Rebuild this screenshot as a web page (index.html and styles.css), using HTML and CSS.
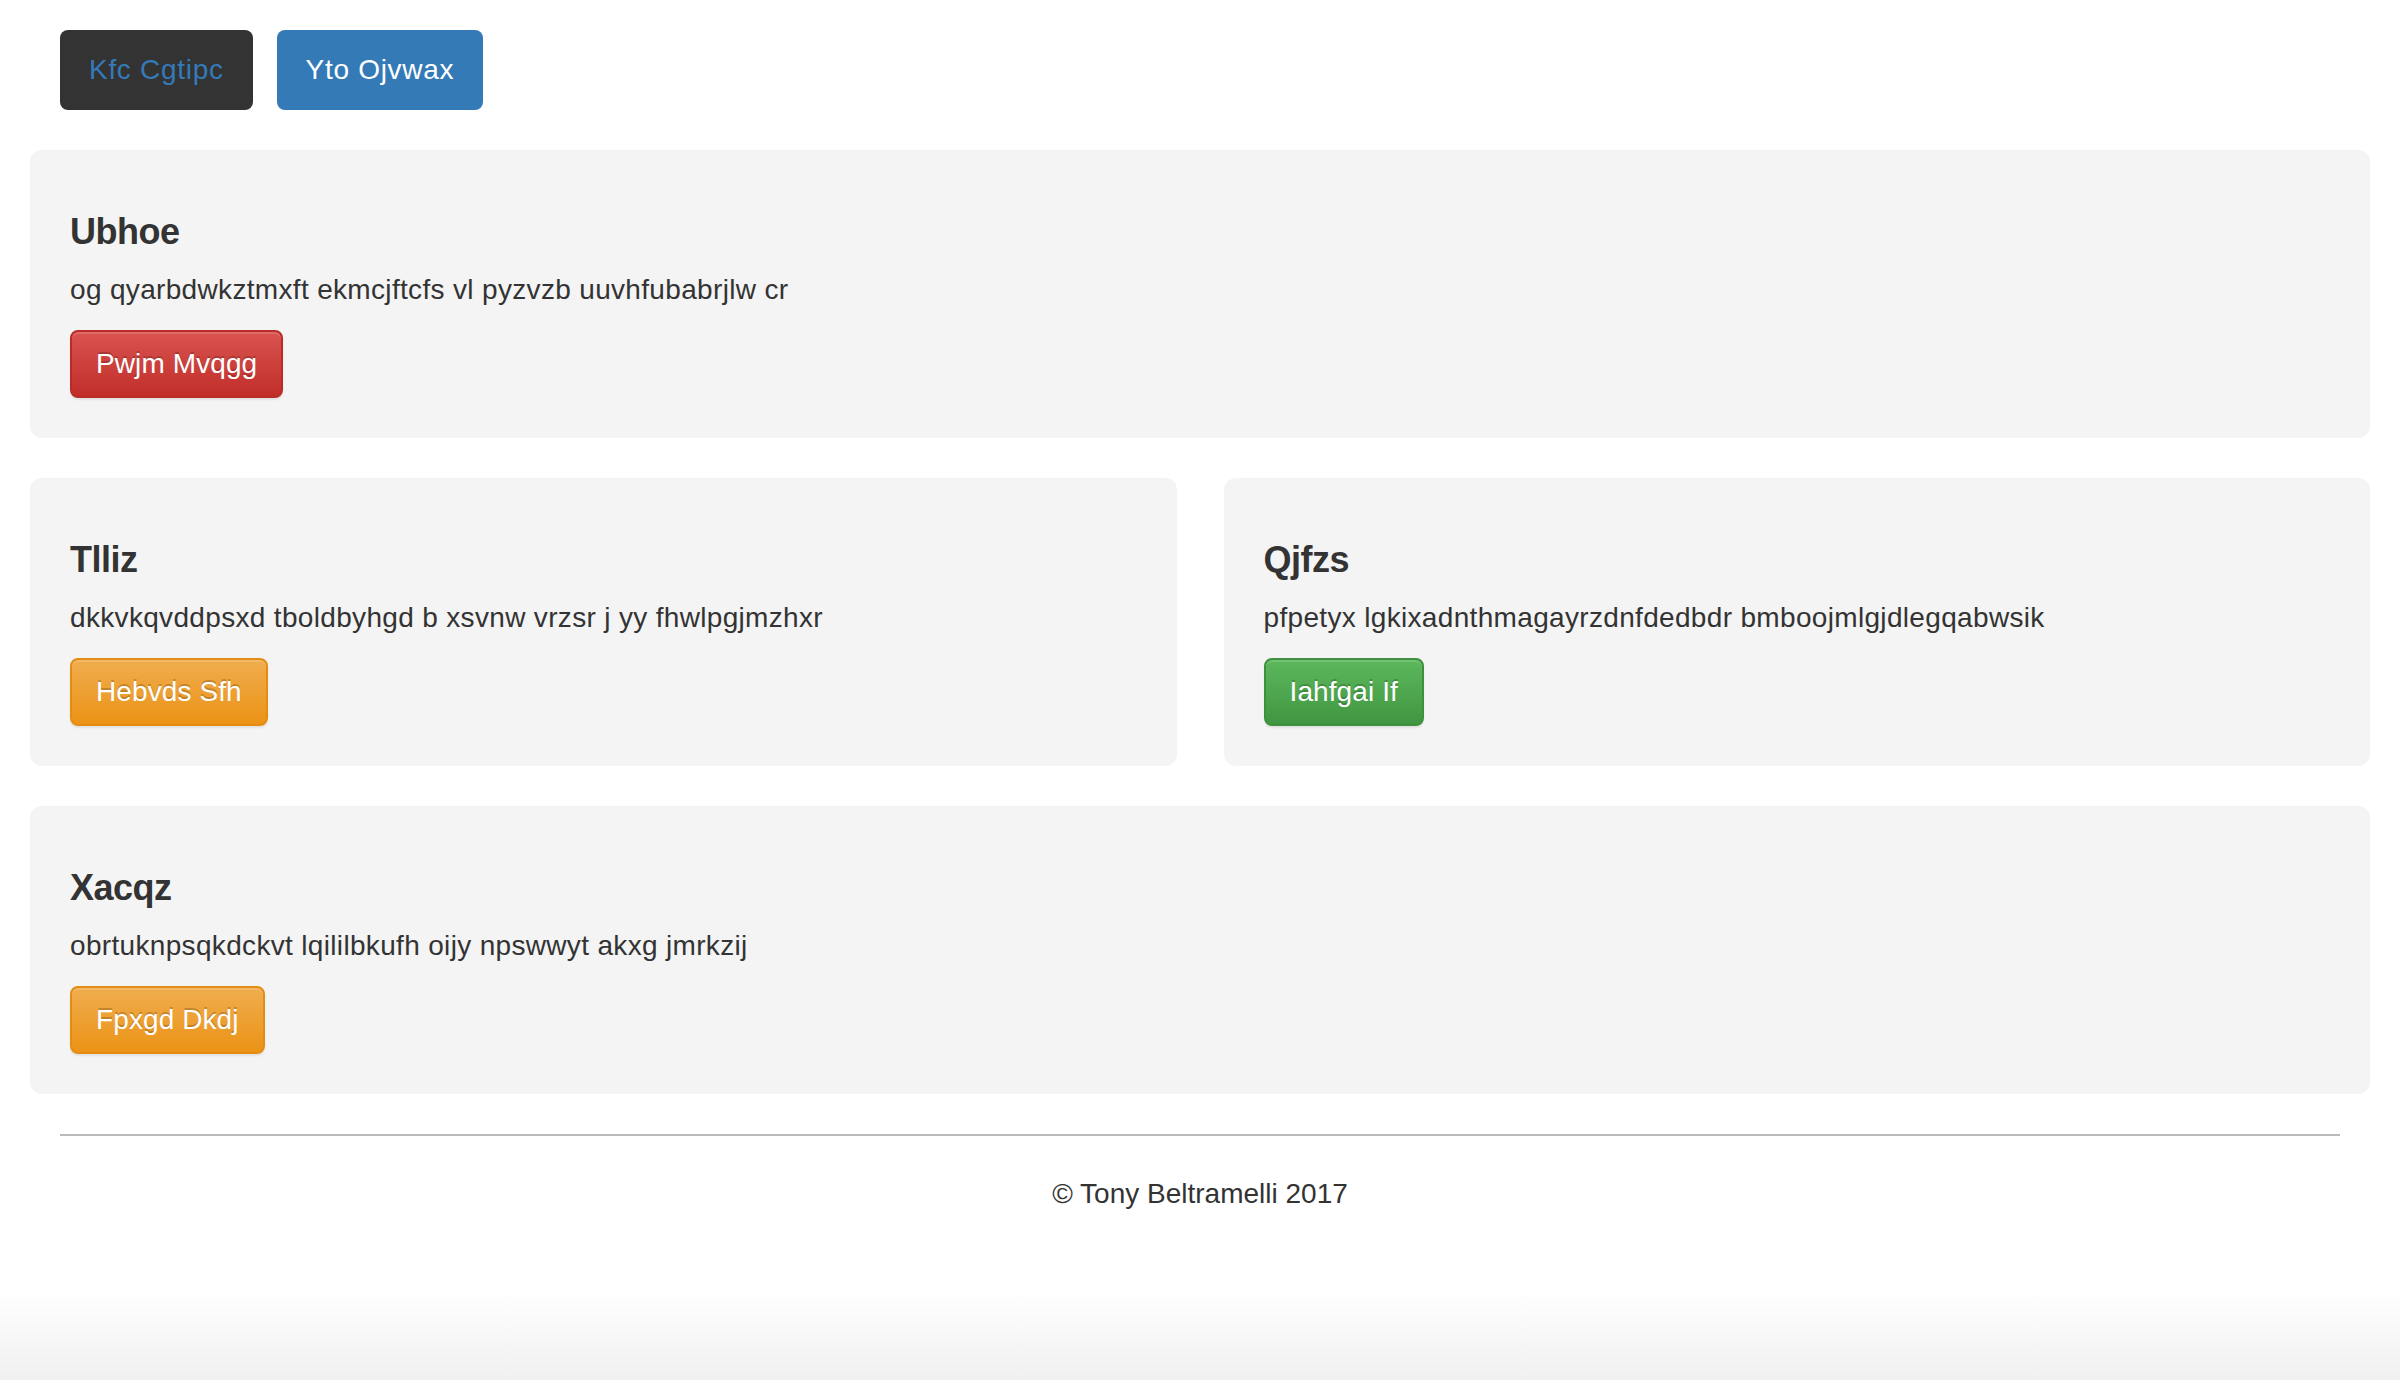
FILE: index.html
```html
<!DOCTYPE html>
<html lang="en">
<head>
<meta charset="utf-8">
<title>Page</title>
<link rel="stylesheet" href="styles.css">
</head>
<body>
<div class="page">
  <nav class="topbar">
    <a class="nav-btn nav-dark">Kfc Cgtipc</a>
    <a class="nav-btn nav-blue">Yto Ojvwax</a>
  </nav>

  <section class="card">
    <h4 class="card-title">Ubhoe</h4>
    <p class="card-text">og qyarbdwkztmxft ekmcjftcfs vl pyzvzb uuvhfubabrjlw cr</p>
    <a class="btn btn-danger">Pwjm Mvqgg</a>
  </section>

  <div class="row">
    <section class="card">
      <h4 class="card-title">Tlliz</h4>
      <p class="card-text">dkkvkqvddpsxd tboldbyhgd b xsvnw vrzsr j yy fhwlpgjmzhxr</p>
      <a class="btn btn-warning">Hebvds Sfh</a>
    </section>
    <section class="card">
      <h4 class="card-title">Qjfzs</h4>
      <p class="card-text">pfpetyx lgkixadnthmagayrzdnfdedbdr bmboojmlgjdlegqabwsik</p>
      <a class="btn btn-success">Iahfgai If</a>
    </section>
  </div>

  <section class="card">
    <h4 class="card-title">Xacqz</h4>
    <p class="card-text">obrtuknpsqkdckvt lqililbkufh oijy npswwyt akxg jmrkzij</p>
    <a class="btn btn-warning">Fpxgd Dkdj</a>
  </section>

  <footer class="footer">
    <hr class="rule">
    <p class="copy">© Tony Beltramelli 2017</p>
  </footer>
</div>
</body>
</html>
```

FILE: styles.css
```css
html {
  min-height: 100%;
  background: linear-gradient(to bottom, #ffffff 0, #ffffff 1290px, #f0f0f0 1380px);
}

body {
  margin: 0;
  font-family: "Liberation Sans", Arial, Helvetica, sans-serif;
  font-size: 28px;
  line-height: 40px;
  color: #333333;
}

.page {
  padding: 30px 30px 0;
}

.topbar {
  display: flex;
  gap: 24px;
  padding: 0 30px;
  margin-bottom: 40px;
}

.nav-btn {
  display: block;
  height: 80px;
  line-height: 80px;
  padding: 0 29px;
  border-radius: 8px;
  font-size: 28px;
  letter-spacing: 0.7px;
  text-decoration: none;
  cursor: pointer;
}

.nav-dark {
  background: #333333;
  color: #337ab7;
}

.nav-blue {
  background: #337ab7;
  color: #ffffff;
}

.card {
  background: #f4f4f4;
  border-radius: 12px;
  padding: 40px;
  margin-bottom: 40px;
}

.row {
  display: grid;
  grid-template-columns: 1fr 1fr;
  column-gap: 47px;
}

.card-title {
  margin: 22px 0 18px;
  font-size: 36px;
  line-height: 40px;
  font-weight: 700;
  letter-spacing: -0.5px;
  color: #333333;
}

.card-text {
  margin: 0 0 20px;
  font-size: 28px;
  line-height: 40px;
  letter-spacing: 0.33px;
}

.btn {
  display: inline-block;
  box-sizing: border-box;
  height: 68px;
  line-height: 40px;
  padding: 12px 24px;
  border: 2px solid transparent;
  border-radius: 8px;
  font-size: 28px;
  letter-spacing: 0.1px;
  color: #ffffff;
  text-shadow: 0 -2px 0 rgba(0, 0, 0, 0.2);
  box-shadow: inset 0 2px 0 rgba(255, 255, 255, 0.15), 0 2px 2px rgba(0, 0, 0, 0.075);
  cursor: pointer;
}

.btn-danger {
  background: linear-gradient(to bottom, #d9534f 0, #c12e2a 100%);
  border-color: #b92c28;
}

.btn-warning {
  background: linear-gradient(to bottom, #f0ad4e 0, #eb9316 100%);
  border-color: #e38d13;
}

.btn-success {
  background: linear-gradient(to bottom, #5cb85c 0, #419641 100%);
  border-color: #3e8f3e;
}

.footer {
  padding: 0 30px;
}

.rule {
  margin: 0;
  border: 0;
  border-top: 2px solid #bbbbbb;
}

.copy {
  margin: 38px 0 0;
  text-align: center;
  font-size: 28px;
  line-height: 40px;
}
```
